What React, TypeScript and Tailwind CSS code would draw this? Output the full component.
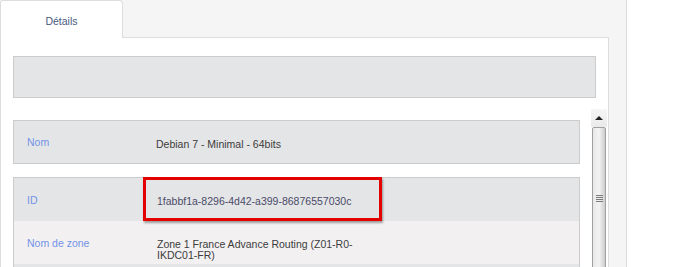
import React from 'react';

interface Row {
  label: string;
  value: string;
  highlight?: boolean;
  bg: string;
}

const rows: Row[] = [
  { label: 'ID', value: '1fabbf1a-8296-4d42-a399-86876557030c', highlight: true, bg: 'bg-[#e4e5e7]' },
  { label: 'Nom de zone', value: 'Zone 1 France Advance Routing (Z01-R0-IKDC01-FR)', bg: 'bg-[#f2f0f1]' },
  { label: '', value: '', bg: 'bg-[#e4e5e7]' },
];

function InfoRow({ row }: { row: Row }) {
  return (
    <div className={`flex h-[43px] ${row.bg}`}>
      <div className="w-[129px] pl-[13px] pt-[16px] leading-[12px] text-[#7393e6]">{row.label}</div>
      <div className="relative w-[239px] pl-[14px] pt-[18px]">
        <div className={`w-[215px] leading-[11px] ${row.highlight ? 'text-[#4b4b68]' : 'text-[#3c3c3c]'}`}>
          {row.value}
        </div>
        {row.highlight && (
          <div className="absolute -top-px left-0 right-0 bottom-0 border-[3px] border-[#e30000] shadow-[1px_2px_2px_rgba(0,0,0,0.35)]" />
        )}
      </div>
    </div>
  );
}

function Scrollbar() {
  return (
    <div className="flex w-[16px] flex-col">
      {/* up arrow */}
      <div className="flex h-[18px] items-center justify-center bg-gradient-to-b from-[#f6f6f6] to-[#eaeaea]">
        <div className="h-0 w-0 border-x-[4px] border-b-[4px] border-x-transparent border-b-[#222]" />
      </div>
      {/* thumb */}
      <div className="relative mx-px h-[200px] rounded-[2px] border border-[#a0a0a0] bg-gradient-to-r from-[#e8e8e8] via-[#f4f4f4] to-[#cdcdcd]">
        <div className="absolute left-[3px] top-[67px] flex w-[7px] flex-col gap-[1px]">
          <div className="h-px bg-[#7a7a7a]" />
          <div className="h-px bg-[#7a7a7a]" />
          <div className="h-px bg-[#7a7a7a]" />
          <div className="h-px bg-[#7a7a7a]" />
        </div>
      </div>
    </div>
  );
}

export default function App() {
  return (
    <div className="h-[267px] w-[700px] overflow-hidden bg-white font-['Liberation_Sans',Arial,sans-serif] text-[10.5px]">
      <div className="h-full w-[627px] border-r border-[#dddddd] bg-[#f5f5f5]">
        {/* Tabs */}
        <div className="flex h-[38px]">
          <div className="flex w-[123px] items-center justify-center rounded-tr-[4px] rounded-tl-[3px] border-l border-r border-t border-[#dddddd] bg-white pt-[4px] text-[#475b80]">
            Détails
          </div>
          <div className="w-[486px] border-b border-[#dddddd]" />
        </div>

        {/* Content panel */}
        <div className="h-full w-[609px] border-l border-r border-[#dddddd] bg-white">
          <div className="px-[12px] pt-[18px]">
            <div className="h-[42px] border border-[#cccccc] bg-[#e4e5e7]" />
          </div>

          <div className="ml-[12px] mt-[11px] flex gap-[11px]">
            <div className="w-[567px] pt-[11px]">
              <div className="flex h-[44px] border border-[#cccccc] bg-[#e4e5e7]">
                <div className="w-[128px] pl-[13px] pt-[15px] leading-[12px] text-[#7393e6]">Nom</div>
                <div className="pl-[14px] pt-[17px] leading-[12px] text-[#3c3c3c]">Debian 7 - Minimal - 64bits</div>
              </div>

              <div className="mt-[13px] border border-[#cccccc]">
                {rows.map((row, idx) => (
                  <InfoRow key={idx} row={row} />
                ))}
              </div>
            </div>
            <Scrollbar />
          </div>
        </div>
      </div>
    </div>
  );
}
